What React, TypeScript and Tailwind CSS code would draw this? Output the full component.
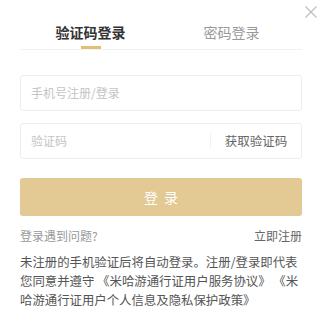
import { useState } from 'react';

const font = 'font-["Noto_Sans_CJK_SC","Noto_Sans",sans-serif]';

export default function App() {
  const [tab, setTab] = useState<'code' | 'pwd'>('code');

  return (
    <div className={`relative w-[322px] h-[331px] bg-white ${font}`}>
      <button className="absolute right-[5px] top-[6px] z-10 block w-[12px] h-[12px] text-[#bdbdbd]" aria-label="close">
        <svg width="12" height="12" viewBox="0 0 12 12" fill="none" stroke="currentColor" strokeWidth="1.2" className="block">
          <path d="M0.5 0.5L11.5 11.5M11.5 0.5L0.5 11.5" />
        </svg>
      </button>

      <div className="px-5">
        <div className="flex border-b border-[#f2f2f2] pt-[22px]">
          <button
            onClick={() => setTab('code')}
            className={`flex-1 flex flex-col items-center text-sm ${tab === 'code' ? 'font-bold text-[#333]' : 'text-[#999]'}`}
          >
            <span className="leading-5">验证码登录</span>
            <span className={`mt-[4px] h-[3px] w-[20px] ${tab === 'code' ? 'bg-[#e2bf73]' : 'bg-transparent'}`} />
          </button>
          <button
            onClick={() => setTab('pwd')}
            className={`flex-1 flex flex-col items-center text-sm ${tab === 'pwd' ? 'font-bold text-[#333]' : 'text-[#999]'}`}
          >
            <span className="leading-5">密码登录</span>
            <span className={`mt-[4px] h-[3px] w-[20px] ${tab === 'pwd' ? 'bg-[#e2bf73]' : 'bg-transparent'}`} />
          </button>
        </div>

        <div className="mt-[25px] flex flex-col gap-3">
          <div className="h-9 rounded-[3px] border border-[#ededed] flex items-center px-[10px]">
            <input
              placeholder="手机号注册/登录"
              className="w-full text-xs outline-none placeholder:text-[#c4c4c4] text-[#333]"
            />
          </div>
          <div className="h-9 rounded-[3px] border border-[#ededed] flex items-center pl-[10px]">
            <input
              placeholder="验证码"
              className="flex-1 min-w-0 text-xs outline-none placeholder:text-[#c4c4c4] text-[#333]"
            />
            <div className="h-[16px] w-px bg-[#f2f2f2]" />
            <button className="w-[90px] text-center text-[12.5px] text-[#666]">获取验证码</button>
          </div>
        </div>

        <button className="mt-[19px] h-[38px] w-full rounded-[3px] bg-[#e3c993] text-white text-sm tracking-[6px] pl-[6px]">
          登录
        </button>

        <div className="mt-[12px] flex justify-between text-xs leading-4">
          <span className="text-[#999]">登录遇到问题?</span>
          <span className="text-[#666]">立即注册</span>
        </div>

        <p className="mt-[9px] text-[12.4px] leading-[19px] text-[#555]">
          未注册的手机验证后将自动登录。注册/登录即代表您同意并遵守 《米哈游通行证用户服务协议》 《米哈游通行证用户个人信息及隐私保护政策》
        </p>
      </div>
    </div>
  );
}
